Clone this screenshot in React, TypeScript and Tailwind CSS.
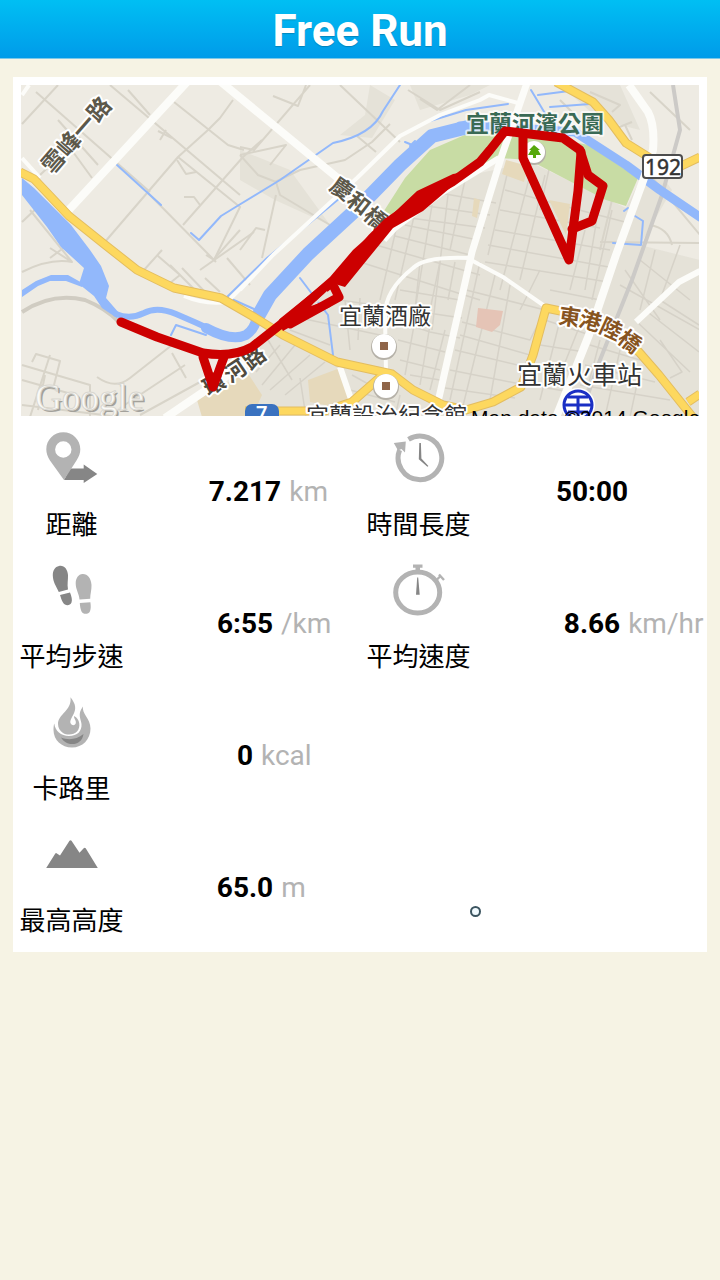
import clsx from "clsx";
import type { ReactNode } from "react";

interface Stat {
  icon: ReactNode;
  label: string;
  unit?: string;
  value: string;
}

const LIGHT = "#b3b3b3";
const DARK = "#868686";

function StatIcon({ children }: { children: ReactNode }) {
  return (
    <svg aria-hidden="true" className="size-13" fill="none" viewBox="0 0 52 52">
      {children}
    </svg>
  );
}

function DistanceIcon() {
  return (
    <StatIcon>
      <path d="M24 36.5h13.7v-4L51.3 42 37.7 51v-3H18z" fill={DARK} />
      <path
        clipRule="evenodd"
        d="M17.3.3C8 .3.3 7.8.3 17.3c0 4 1.2 7 3.5 11L18 48l12.800-20c2.300-3.700 3.500-6.700 3.500-10.700C34.300 7.800 26.700.3 17.300.3zm0 9a8.200 8.200 0 1 1 0 16.400 8.200 8.200 0 0 1 0-16.400z"
        fill={LIGHT}
        fillRule="evenodd"
      />
    </StatIcon>
  );
}

function DurationIcon() {
  return (
    <StatIcon>
      <path
        d="M15.500 7.300A21.800 21.800 0 1 1 6.600 18"
        stroke={LIGHT}
        strokeWidth={5}
      />
      <path d="M.8 11l12-1.500L12 20.500 8.500 17 5 18.500z" fill={LIGHT} />
      <path d="M26.300 11h1.600l.5 15.500 7 7.500-1 .8-8.600-7.600z" fill={DARK} />
    </StatIcon>
  );
}

function PaceIcon() {
  return (
    <StatIcon>
      <path
        d="M13 2c5-1 8.500 3 9 9 .2 5-1 9 0 14.500L12.800 28C10 22 7 18 6.800 11.500 6.700 6.500 9 2.700 13 2zM14 31l10-2.500c1.500 4 2.500 7 1.500 10C24 42 19 42 17 38.500 15.500 36 15 34 14 31z"
        fill={DARK}
      />
      <path
        d="M36.500 10c5-.3 8.500 4 9 11 .2 5-1.300 9-1.300 13.700L33.500 35.500c-.5-6-3.800-10-3.800-16C29.700 14 32.500 10.300 36.500 10zM33.800 39l10.600-.8c.5 4 .6 6.500-.4 9-1.500 3.500-7 3.500-8.500.3-1-2.500-1.500-5-1.700-8.500z"
        fill={LIGHT}
      />
    </StatIcon>
  );
}

function SpeedIcon() {
  return (
    <StatIcon>
      <ellipse
        cx={24.7}
        cy={28.5}
        rx={22}
        ry={20.5}
        stroke={LIGHT}
        strokeWidth={5}
      />
      <path d="M20 .5h9.500v3.200H27V7h-4.500V3.700H20z" fill={LIGHT} />
      <path
        d="M44 15.500l3.500-3.500M46 10.500l5 5.500"
        stroke={LIGHT}
        strokeWidth={2.4}
      />
      <path d="M24.200 13.500h1l1.500 17.300H23z" fill={DARK} />
    </StatIcon>
  );
}

function CaloriesIcon() {
  return (
    <StatIcon>
      <path
        d="M24.500 1.300c5.500 7 6 11.700 2.500 18-2 3.700-4 7-1.500 9.200 2.500 2 6-.5 3.500-5-.5-1-1-2-1-3.500 6 3 7 11 3 15.500-3 3.500-10 4-14 1.500-3-2-5-5-5-9 0-10 14-13 12.500-26.700z"
        fill={LIGHT}
      />
      <path
        d="M37 10.500c-1.500 7 7.500 12 7.500 22 0 11-8 19-18.500 19S7.500 44 7.500 34c0-2.500.2-5 .8-6.500C9 35 15 40 23 40c8.500 0 13-5 12.500-12C35 23 31 18 37 10.500z"
        fill={LIGHT}
      />
      <path d="M15 41.500c7 3 16 2 22.500-3.500C36 50 21 51.500 15 41.500z" fill={DARK} />
    </StatIcon>
  );
}

function AltitudeIcon() {
  return (
    <StatIcon>
      <path
        d="M.2 40L9.300 25.500q.8-1 1.600 0l3.100 2L23.500 12.800q1-1.300 2 0l8 12 4.200-4.600q1-1 2 0L51.800 40z"
        fill={DARK}
      />
    </StatIcon>
  );
}

const STATS: Stat[] = [
  { icon: <DistanceIcon />, label: "距離", value: "7.217", unit: "km" },
  { icon: <DurationIcon />, label: "時間長度", value: "50:00" },
  { icon: <PaceIcon />, label: "平均步速", value: "6:55", unit: "/km" },
  { icon: <SpeedIcon />, label: "平均速度", value: "8.66", unit: "km/hr" },
  { icon: <CaloriesIcon />, label: "卡路里", value: "0", unit: "kcal" },
  { icon: <AltitudeIcon />, label: "最高高度", value: "65.0", unit: "m" },
];

const MINOR_STREETS = [
  "M22 124L58 85M36 92L150 192M58 120L98 165M110 85L240 195M150 115L128 90",
  "M40 175L80 137M68 145L92 178M174 102L228 145L244 150M208 130L178 157L104 243",
  "M233 100L220 118L208 130M178 157L240 207L214 260L206 255M147 192L216 262",
  "M183 225L243 157L262 140M158 131L172 138M160 140L166 130",
  "M177 160L186 174L196 172M184 197L194 197L200 205M215 258L240 230",
  "M240 147L254 150L310 85M273 96L298 106L306 85M270 165L286 145L240 155",
  "M340 85L400 142M357 136L376 152M390 124L372 142L345 160L300 170L275 182",
  "M240 155L258 175L276 182L280 195L330 225M276 195L262 258",
  "M420 99L437 110L470 85M408 90L440 110L480 92M240 250L256 228L265 230",
  "M22 272Q50 258 72 262L50 248M50 258L66 246M22 222L40 205M30 210L72 262",
  "M22 365L90 385L90 417M22 380L75 395M30 417L50 355M22 405L120 417M32 362L36 354L60 361L54 385M45 375L38 410",
  "M97 377Q115 390 130 378L172 345M120 408L185 365M140 415L200 382M172 353L186 378",
  "M144 270L162 250M158 256L180 275L170 283M170 265L200 295M182 268L205 292M200 270L254 232M205 278L220 292M227 258L250 285",
  "M590 92L620 105L612 112M560 100L590 130M650 92L690 130M612 130L632 122M625 125L632 140",
  "M646 170L700 235M650 225Q668 228 672 245M600 242L700 243M612 200L600 250",
];

const TOWN_STREETS = [
  "M345 270L360 262L480 300M340 300L462 318M376 245L480 275M395 236L474 256M405 225L478 240M410 218L485 228",
  "M420 205L490 215M440 193L496 203M397 225L380 300M415 212L395 300M432 205L415 310M448 195L432 330M465 180L450 250",
  "M510 162L488 255M530 175L500 290M545 175L520 280M505 190L560 205L625 222M500 210L600 228M495 230L610 250",
  "M488 245L614 268M485 262L608 282M550 165L540 210M585 230L570 290M600 200L585 290M612 210L592 300M540 270L520 310",
  "M466 290L545 310L530 340L462 322M460 335L530 355M455 350L530 368M450 370L525 385M445 388L515 398M480 262L450 400M495 275L462 410M510 285L490 400",
  "M550 290L600 300M545 320L590 335M540 345L585 352M535 365L575 372M530 385L570 392M560 320L540 400M580 325L560 375M600 340L580 417M620 350L605 417M640 370L630 417",
  "M590 345L640 360M585 365L655 382M580 385L670 400M625 270L660 320M640 260L690 300M620 285L700 330M635 320L690 372M645 310L699 352M660 300L699 325M660 340L682 372L670 378M655 250L640 310M680 245L660 300",
  "M290 330L330 345M300 318L380 335M345 300L350 350M360 298L358 340M395 320L430 332L460 338M398 340L445 352M400 360L440 370M410 375L440 380M415 320L405 375M430 325L420 385M445 330L430 390",
  "M268 340L292 380M280 345L256 372M295 345L262 385M310 355L270 390M325 362L285 395M300 378L306 417M352 375L370 385M350 390L395 402M400 395L395 417",
  "M420 262L415 310M440 262L430 310M455 262L448 300M400 290L460 300",
];

const ROUTE_LINES = [
  "M121 322L157 337L203 353Q232 358 252 347L285 321",
  "M203 357L213 387L224 357",
  "M283 322L335 280L372 238L388 222L420 200L452 182L480 162L490 150L505 131L563 138L580 150L588 175L603 186L592 221L572 229",
  "M290 324L339 297L334 287",
  "M523 134L523 158L569 260L578 191L581 152",
];

interface PlacedLabel {
  char: string;
  rotate: number;
  x: number;
  y: number;
}

const BRIDGE_LABEL: PlacedLabel[] = [
  { char: "慶", x: 343, y: 187, rotate: 35 },
  { char: "和", x: 360, y: 202, rotate: 38 },
  { char: "橋", x: 377, y: 217, rotate: 42 },
];

const RIVER_ROAD_LABEL: PlacedLabel[] = [
  { char: "環", x: 213, y: 382, rotate: -30 },
  { char: "河", x: 234, y: 369, rotate: -34 },
  { char: "路", x: 253, y: 356, rotate: -38 },
];

const OVERPASS_LABEL: PlacedLabel[] = [
  { char: "東", x: 570, y: 315, rotate: 8 },
  { char: "港", x: 591, y: 319, rotate: 15 },
  { char: "陸", x: 612, y: 327, rotate: 25 },
  { char: "橋", x: 631, y: 340, rotate: 38 },
];

function CurvedLabel({ chars, fill }: { chars: PlacedLabel[]; fill: string }) {
  return (
    <g
      dominantBaseline="central"
      fill={fill}
      fontSize={22}
      fontWeight={700}
      paintOrder="stroke"
      stroke="#fff"
      strokeWidth={4}
      textAnchor="middle"
    >
      {chars.map(({ char, x, y, rotate }) => (
        <text key={char} transform={`translate(${x} ${y}) rotate(${rotate})`}>
          {char}
        </text>
      ))}
    </g>
  );
}

function PoiMarker({ x, y }: { x: number; y: number }) {
  return (
    <>
      <circle cx={x} cy={y + 1} fill="#b5b1a8" r={13} />
      <circle cx={x} cy={y} fill="#fff" r={12} />
      <rect fill="#8f6549" height={8} width={8} x={x - 4} y={y - 4} />
    </>
  );
}

function RouteMap() {
  return (
    <svg
      aria-label="Route map"
      className="block h-auto w-full font-['Noto_Sans_CJK_TC',sans-serif]"
      fill="none"
      role="img"
      strokeLinejoin="round"
      viewBox="21 85 678 331"
    >
      <rect fill="#eeebe3" height={331} width={678} x={21} y={85} />
      <path
        d="M385 238L466 176L530 162L626 208L650 160L672 190L640 245L700 260V417H240L256 345L330 280zM440 85H620L640 130L600 120L560 85zM240 150L290 170L330 225L275 200L240 180zM370 85L395 100L372 138L340 135L365 115zM410 85H490L470 95L420 110z"
        fill="#e5e2d8"
      />
      <g stroke="#d8d4c9" strokeWidth={2}>
        {MINOR_STREETS.map((d) => (
          <path d={d} key={d} />
        ))}
      </g>
      <g stroke="#d6d2c8" strokeWidth={1.5}>
        {TOWN_STREETS.map((d) => (
          <path d={d} key={d} />
        ))}
      </g>
      <path
        d="M22 312Q52 292 85 300Q105 308 119 322"
        stroke="#d0ccc2"
        strokeWidth={4}
      />
      <path
        d="M197 400L247 372L262 395L252 417H202zM308 380L340 368L350 398L340 408L310 402zM506 160L528 166L524 182L502 174zM549 200L570 204L566 235zM474 198L480 200L477 218L472 216z"
        fill="#e6d9bb"
      />
      <path d="M478 308L503 311L500 325L492 332L476 327z" fill="#e5c4b6" />
      <path
        d="M673 85L680 130L662 195L632 280L600 360L580 417"
        stroke="#cccac7"
        strokeWidth={4}
      />
      <path
        d="M382 214L405 178L430 150L467 134L520 132L589 145L638 178L626 206L606 200L529 160L500 158L440 192L386 226z"
        fill="#c8dca4"
      />

      <g fill="#92b8fb">
        <path d="M22 178L34 188L71 225L90 250L101 266L109 286L106 298L119 313L117 318L102 308L94 296L79 284L84 268L61 247L47 227L22 195z" />
        <path d="M22 290L36 281L51 275L68 275L84 284L82 287L66 281L50 281L38 286L22 297z" />
      </g>
      <g stroke="#92b8fb" strokeLinecap="round">
        <path
          d="M116 314Q130 320 144 313Q157 306 176 314T214 331"
          strokeWidth={6}
        />
        <path d="M206 328Q232 342 246 335Q254 330 257 318" strokeWidth={10} />
        <path
          d="M257 318L270 295L308 254L360 206L400 165L432 136L468 127"
          strokeWidth={14}
        />
        <path
          d="M460 126L500 127L575 132L626 165L660 190L700 217"
          strokeWidth={9}
        />
        <path
          d="M400 85L383 111Q372 135 333 143L280 180L234 208L221 216L199 240L191 233M117 165L161 205M340 198L267 258L227 297M405 142L422 149M410 146L415 141M300 278L328 315L333 355M171 335L176 325L206 335M624 211L628 208M643 221L641 245L613 243M635 216L643 221M531 90L546 115M538 95L569 91M550 107L590 104M430 121L466 110L508 104M227 297L254 309"
          strokeWidth={2}
        />
      </g>

      <g stroke="#fcfcf9" strokeWidth={8}>
        <path d="M187 82L67 212M221 82L345 184M629 85L648 112Q655 125 653 150L643 181L616 255L589 335L555 420M165 418L262 352" />
        <path d="M528 80L501 158L472 252L438 402" strokeWidth={7} />
        <path
          d="M384 240L395 228L440 194L499 158M700 271L679 282L636 322M340 367L352 402"
          strokeWidth={6}
        />
        <path
          d="M240 290L273 255L357 178L400 136L440 115L480 100L489 95L518 103M254 275L227 302Q205 305 184 296M22 95L29 85M22 158L40 178M470 258Q425 256 413 268Q385 290 385 315L386 372L405 385M471 260L503 277L546 307"
          strokeWidth={4}
        />
      </g>

      {/* main roads, casing first */}
      {[
        { stroke: "#e3bd60", width: 9 },
        { stroke: "#fdd85f", width: 7 },
      ].map(({ stroke, width }) => (
        <path
          d="M20 172L34 179L69 216L104 244L137 270L174 288L221 298L254 317L283 335L337 362L392 374L413 390L443 405L466 410L493 402L521 387L533 355L546 308L575 314L609 330L639 352L659 375L695 420M700 394L688 402M385 373L352 402L325 411H245M556 82L593 102L609 120L626 143L650 158L679 167L700 157"
          key={stroke}
          stroke={stroke}
          strokeWidth={width}
        />
      ))}

      <CurvedLabel chars={BRIDGE_LABEL} fill="#5c584a" />
      <CurvedLabel chars={RIVER_ROAD_LABEL} fill="#4f4b3f" />
      <CurvedLabel chars={OVERPASS_LABEL} fill="#87541f" />

      <g fontSize={23} paintOrder="stroke" stroke="#fff" strokeWidth={4}>
        <text
          dominantBaseline="central"
          fill="#5c584a"
          fontWeight={700}
          textAnchor="middle"
          transform="translate(75 134) rotate(-49)"
        >
          雪峰一路
        </text>
        <text fill="#3a6a55" fontWeight={700} strokeOpacity={0.7} x={466} y={132}>
          宜蘭河濱公園
        </text>
        <text fill="#333" x={339} y={324}>
          宜蘭酒廠
        </text>
        <text fill="#333" fontSize={25} x={517} y={384}>
          宜蘭火車站
        </text>
        <text fill="#333" x={306} y={424}>
          宜蘭設治紀念館
        </text>
      </g>

      <circle cx={578} cy={405} fill="#fff" r={17} />
      <g stroke="#1a2fc4" strokeWidth={3}>
        <circle cx={578} cy={405} r={14} />
        <path d="M568 397H588M564 405H592M568 412H588M578 397V417" />
      </g>

      <rect fill="#3a72c0" height={18} rx={7} width={34} x={245} y={404} />
      <text
        className="font-['Noto_Sans',sans-serif]"
        fill="#fff"
        fontSize={20}
        fontWeight={600}
        x={256}
        y={420}
      >
        7
      </text>
      <rect
        fill="#fff"
        height={23}
        rx={3}
        stroke="#4d4d4d"
        strokeWidth={2}
        width={39}
        x={643}
        y={155}
      />
      <text
        className="font-['Noto_Sans',sans-serif]"
        fill="#333"
        fontSize={21}
        stroke="#333"
        strokeWidth={0.5}
        textAnchor="middle"
        x={663}
        y={175}
      >
        192
      </text>

      <PoiMarker x={384} y={346} />
      <PoiMarker x={386} y={386} />
      <circle cx={534} cy={153} fill="#b5b1a8" r={12} />
      <circle cx={534} cy={152} fill="#fff" r={11} />
      <path
        d="M534 145L540 150H538L541 155H536V158H533V155H528L531 150H529z"
        fill="#56a80c"
      />

      <g stroke="#c00" strokeLinecap="round" strokeWidth={9}>
        {ROUTE_LINES.map((d) => (
          <path d={d} key={d} />
        ))}
      </g>
      {/* stretch where the outbound and return tracks overlap */}
      <path
        d="M278 322L330 277L353 250L380 226L417 191L453 174L472 171L450 188L423 211L393 228L345 287L335 284L326 291L311 306L340 296L330 307L297 323L283 331z"
        fill="#c00"
      />
      <path d="M312 305L327 291L330 296z" fill="#e5e2d8" />

      <g
        className="font-['Liberation_Serif',serif]"
        fontSize={37}
        strokeWidth={1}
      >
        <text fill="#a3a19b" x={37} y={412}>
          Google
        </text>
        <text fill="#faf9f6" stroke="#d9d7d0" x={35} y={410}>
          Google
        </text>
      </g>
      <text
        className="font-['Liberation_Sans',sans-serif]"
        fill="#000"
        fontSize={21}
        x={471}
        y={425}
      >
        Map data ©2014 Google
      </text>
    </svg>
  );
}

function StatItem({ icon, label, value, unit }: Stat) {
  return (
    <div className="flex h-33">
      <dt className="flex w-[117px] shrink-0 flex-col items-center pt-2 font-['Noto_Sans_CJK_TC',sans-serif] text-[26px] text-black leading-[30px]">
        {icon}
        <span className="mt-6">{label}</span>
      </dt>
      <dd className="grid min-w-0 flex-1 grid-cols-[minmax(0,1fr)_auto_minmax(0,1fr)] items-center gap-x-2 whitespace-nowrap pt-1 text-[28px]">
        <span className="col-start-2 font-bold text-black">{value}</span>
        {unit && <span className="text-[#b3b3b3]">{unit}</span>}
      </dd>
    </div>
  );
}

export default function App() {
  return (
    <div className="min-h-screen bg-[#f6f3e4] font-[Roboto,sans-serif]">
      <header
        className={clsx(
          "flex h-[59px] items-center justify-center pt-1",
          "border-[#7cc8e8] border-b bg-linear-to-b from-[#00bff3] to-[#009be9]"
        )}
      >
        <h1 className="font-bold text-[44px] text-white leading-none text-shadow-xs">
          Free Run
        </h1>
      </header>
      <main className="mx-[13px] mt-[18px] bg-white">
        <div className="p-2">
          <RouteMap />
        </div>
        <dl className="grid grid-cols-2">
          {STATS.map((stat, index) => (
            <div className={clsx(index > 3 && "col-start-1")} key={stat.label}>
              <StatItem {...stat} />
            </div>
          ))}
          <div className="col-start-2 row-start-4 pt-[86px] pl-[110px]">
            <span className="block size-[11px] rounded-full border-2 border-[#3c5560] bg-[#f2fbff]" />
          </div>
        </dl>
      </main>
    </div>
  );
}
